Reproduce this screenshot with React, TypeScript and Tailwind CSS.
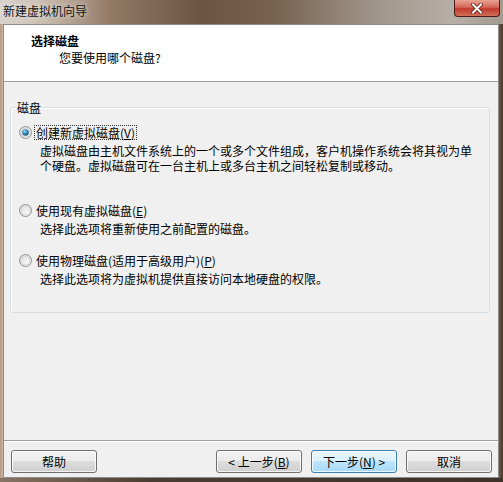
import React from "react";

const font = { fontFamily: '"Noto Sans CJK SC", "Noto Sans", sans-serif' };

function Radio({ checked }: { checked?: boolean }) {
  return (
    <svg width="13" height="13" viewBox="0 0 13 13" className="shrink-0">
      <defs>
        <linearGradient id={checked ? "rgc" : "rgu"} x1="0" y1="0" x2="1" y2="1">
          <stop offset="0" stopColor="#dcdcdc" />
          <stop offset="1" stopColor="#ffffff" />
        </linearGradient>
        <radialGradient id="dot" cx="0.4" cy="0.35" r="0.7">
          <stop offset="0" stopColor="#a8e0f8" />
          <stop offset="0.45" stopColor="#3a8fbf" />
          <stop offset="1" stopColor="#0d4a6e" />
        </radialGradient>
      </defs>
      <circle cx="6.5" cy="6.5" r="6" fill={checked ? "url(#rgc)" : "url(#rgu)"} stroke="#8e8f8f" strokeWidth="1" />
      <circle cx="6.5" cy="6.5" r="4.5" fill="none" stroke="#d2d2d2" strokeWidth="1" />
      {checked && <circle cx="6.5" cy="6.5" r="3.2" fill="url(#dot)" />}
    </svg>
  );
}

function Btn({ children, primary }: { children: React.ReactNode; primary?: boolean }) {
  return (
    <div
      className={
        "w-[86px] h-[23px] rounded-[3px] border flex items-center justify-center text-[12px] text-black leading-[15px] shadow-[inset_0_0_0_1px_rgba(255,255,255,0.75)] " +
        (primary
          ? "border-[#3c7fb1] bg-[linear-gradient(180deg,#eaf6fd_0%,#d9f0fc_50%,#bee6fd_50%,#a7d9f5_100%)]"
          : "border-[#707070] bg-[linear-gradient(180deg,#f2f2f2_0%,#ebebeb_50%,#dddddd_50%,#cfcfcf_100%)]")
      }
    >
      {children}
    </div>
  );
}

export default function App() {
  return (
    <div className="w-[503px] h-[482px] flex flex-col overflow-hidden bg-[#7a6553]" style={font}>
      {/* title bar */}
      <div className="h-[24px] shrink-0 flex items-start bg-[linear-gradient(90deg,#d8d3cc_0%,#cbbfb2_8%,#937a65_22%,#6c5441_40%,#786350_55%,#a1968b_75%,#b6afa7_90%,#a39a90_100%)]">
        <div className="pl-[3px] pt-[3px] text-[12px] leading-[15px] text-[#111] [text-shadow:0_0_6px_rgba(255,255,255,0.9)]">
          新建虚拟机向导
        </div>
        <div className="ml-auto mr-[3px] w-[46px] h-[17px] rounded-b-[4px] border border-t-0 border-[#4a1e16] bg-[linear-gradient(180deg,#e9a494_0%,#d4675a_45%,#c0392a_55%,#d2705a_100%)] flex items-center justify-center">
          <svg width="12" height="11" viewBox="0 0 12 11">
            <path d="M2 1.5 L10 9.5 M10 1.5 L2 9.5" stroke="#5a1a10" strokeWidth="3.6" strokeLinecap="square" />
            <path d="M2 1.5 L10 9.5 M10 1.5 L2 9.5" stroke="#ffffff" strokeWidth="2" strokeLinecap="square" />
          </svg>
        </div>
      </div>

      <div className="flex flex-1">
        {/* left frame */}
        <div className="w-[3px] bg-[linear-gradient(90deg,#b49a84,#cdb6a2)]" />
        {/* client */}
        <div className="w-[496px] h-[454px] border border-[#8c8c8c] flex flex-col bg-[#f0f0f0] text-[12px] leading-[15px] text-black">
          {/* header */}
          <div className="h-[57px] shrink-0 bg-white border-b border-[#a0a0a0] pt-[8px]">
            <div className="pl-[27px] font-bold">选择磁盘</div>
            <div className="pl-[55px] mt-[2px]">您要使用哪个磁盘?</div>
          </div>

          {/* content */}
          <div className="flex-1 pt-[25px]">
            <div className="relative ml-[6px] mr-[8px] h-[206px] border border-[#d5dfe5] rounded-[3px] shadow-[inset_1px_1px_0_#ffffff]">
              <div className="absolute -top-[8px] left-[5px] px-[1px] bg-[#f0f0f0] leading-[15px]">磁盘</div>
              <div className="pt-[17px] pl-[8px]">
                <div className="flex items-center h-[15px]">
                  <Radio checked />
                  <span className="ml-[2px] px-[1px] border border-dotted border-[#333] leading-[13px]">
                    创建新虚拟磁盘(<span className="underline">V</span>)
                  </span>
                </div>
                <div className="mt-[3px] pl-[21px] h-[15px] whitespace-nowrap">
                  虚拟磁盘由主机文件系统上的一个或多个文件组成，客户机操作系统会将其视为单
                </div>
                <div className="pl-[21px] h-[15px] whitespace-nowrap">
                  个硬盘。虚拟磁盘可在一台主机上或多台主机之间轻松复制或移动。
                </div>

                <div className="mt-[30px] flex items-center h-[15px]">
                  <Radio />
                  <span className="ml-[3px] px-[1px]">
                    使用现有虚拟磁盘(<span className="underline">E</span>)
                  </span>
                </div>
                <div className="mt-[3px] pl-[21px]">选择此选项将重新使用之前配置的磁盘。</div>

                <div className="mt-[17px] flex items-center h-[15px]">
                  <Radio />
                  <span className="ml-[3px] px-[1px]">
                    使用物理磁盘(适用于高级用户)(<span className="underline">P</span>)
                  </span>
                </div>
                <div className="mt-[3px] pl-[21px]">选择此选项将为虚拟机提供直接访问本地硬盘的权限。</div>
              </div>
            </div>
          </div>

          {/* footer */}
          <div className="shrink-0 border-t border-[#a0a0a0]" />
          <div className="shrink-0 border-t border-white" />
          <div className="h-[35px] shrink-0 flex items-start pt-[8px] pl-[7px] pr-[6px]">
            <Btn>帮助</Btn>
            <div className="ml-auto flex gap-[9px]">
              <Btn>
                &lt; 上一步(<span className="underline">B</span>)
              </Btn>
              <Btn primary>
                下一步(<span className="underline">N</span>) &gt;
              </Btn>
              <Btn>取消</Btn>
            </div>
          </div>
        </div>
        {/* right frame */}
        <div className="w-[4px] bg-[linear-gradient(90deg,#6a5646,#4a3a2e)]" />
      </div>
      {/* bottom frame */}
      <div className="h-[4px] shrink-0 bg-[linear-gradient(90deg,#8a7462,#4a3c30_30%,#3e3228_100%)]" />
    </div>
  );
}
